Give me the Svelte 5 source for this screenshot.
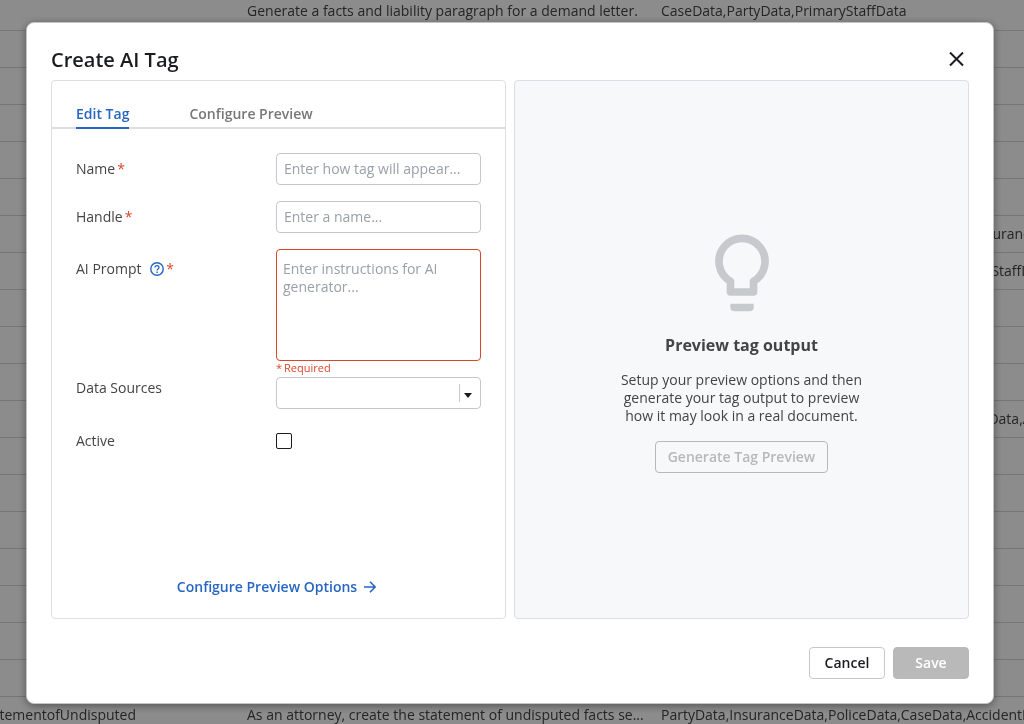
<script lang="ts">
  type Row = { name?: string; description?: string; sources?: string };

  const rows: Row[] = [
    {
      description: "Generate a facts and liability paragraph for a demand letter.",
      sources: "CaseData,PartyData,PrimaryStaffData",
    },
    {}, {}, {}, {}, {},
    { sources: "PartyData,CaseData,AccidentInfo,MedicaidData,InsuranceData" },
    { sources: "CaseData,PartyData,OfficeData,PoliceData,PrimaryStaffData" },
    {}, {}, {},
    { sources: "PartyData,InsuranceData,PoliceData,CaseData,FileData,AccidentInfo" },
    {}, {}, {}, {}, {}, {}, {},
    {
      name: "StatementofUndisputed",
      description: "As an attorney, create the statement of undisputed facts se...",
      sources: "PartyData,InsuranceData,PoliceData,CaseData,AccidentInfo",
    },
  ];

  const tabs = ["Edit Tag", "Configure Preview"];

  let open = $state(true);
  let activeTab = $state(0);
  let name = $state("");
  let handle = $state("");
  let prompt = $state("");
  let active = $state(false);
  let valid = $derived(name !== "" && handle !== "" && prompt !== "");
</script>

<div class="page">
  <table>
    <tbody>
      {#each rows as row}
        <tr>
          <td class="col-name"><span>{row.name ?? ""}</span></td>
          <td class="col-description">{row.description ?? ""}</td>
          <td>{row.sources ?? ""}</td>
        </tr>
      {/each}
    </tbody>
  </table>
</div>

{#if open}
  <div class="overlay">
    <div class="modal" role="dialog" aria-modal="true" aria-labelledby="modal-title">
      <header>
        <h1 id="modal-title">Create AI Tag</h1>
        <button class="close" aria-label="Close" onclick={() => (open = false)}>
          <svg width="16" height="16" viewBox="0 0 16 16">
            <path d="M1 .5l13 13M14 .5l-13 13" stroke="currentColor" stroke-width="2" />
          </svg>
        </button>
      </header>

      <div class="panels">
        <section class="panel">
          <div class="tabs" role="tablist">
            {#each tabs as tab, i}
              <button
                role="tab"
                class="tab"
                class:selected={activeTab === i}
                aria-selected={activeTab === i}
                onclick={() => (activeTab = i)}>{tab}</button
              >
            {/each}
          </div>

          <form>
            <div class="row">
              <label for="name">Name<span class="star">*</span></label>
              <input id="name" type="text" placeholder="Enter how tag will appear..." bind:value={name} />
            </div>
            <div class="row">
              <label for="handle">Handle<span class="star">*</span></label>
              <input id="handle" type="text" placeholder="Enter a name..." bind:value={handle} />
            </div>
            <div class="row top prompt">
              <label for="prompt">
                AI Prompt
                <svg class="help" width="14" height="14" viewBox="0 0 14 14" fill="none" stroke="currentColor">
                  <circle cx="7" cy="7" r="6.2" stroke-width="1.4" />
                  <path d="M5 5.6c0-1.2.9-1.9 2-1.9s2 .7 2 1.8c0 1.4-1.9 1.5-1.9 3" stroke-width="1.3" />
                  <path d="M7.1 9.5v1.4" stroke-width="1.4" />
                </svg><span class="star">*</span>
              </label>
              <div>
                <textarea id="prompt" placeholder="Enter instructions for AI generator..." bind:value={prompt}></textarea>
                <p class="error"><span>*</span>Required</p>
              </div>
            </div>
            <div class="row top sources">
              <label for="sources">Data Sources</label>
              <div class="select">
                <select id="sources"><option value=""></option></select>
                <svg width="14" height="18" viewBox="0 0 14 18">
                  <path d="M.5 0v18" stroke="#c4c8cc" />
                  <path d="M5 9h8l-4 5z" fill="#1b1c20" />
                </svg>
              </div>
            </div>
            <div class="row">
              <label for="active">Active</label>
              <input id="active" type="checkbox" bind:checked={active} />
            </div>
          </form>

          <button class="next" onclick={() => (activeTab = 1)}>
            Configure Preview Options
            <svg width="12" height="12" viewBox="0 0 12 12" fill="none" stroke="currentColor" stroke-width="1.6">
              <path d="M0 6h11M6 .8L11.2 6 6 11.2" />
            </svg>
          </button>
        </section>

        <section class="panel preview">
          <svg class="bulb" width="92" height="92" viewBox="15 21 276 276">
            <path
              d="M118.5 216V184A69 69 0 1 1 187.5 184V216Z"
              fill="none"
              stroke="currentColor"
              stroke-width="23"
              stroke-linejoin="round"
            />
            <path d="M118 251h70v11a12 12 0 0 1-12 12h-46a12 12 0 0 1-12-12z" fill="currentColor" />
          </svg>
          <h2>Preview tag output</h2>
          <p>
            Setup your preview options and then generate your tag output to preview how it may look in a
            real document.
          </p>
          <button class="btn generate" disabled>Generate Tag Preview</button>
        </section>
      </div>

      <footer>
        <button class="btn" onclick={() => (open = false)}>Cancel</button>
        <button class="btn save" disabled={!valid}>Save</button>
      </footer>
    </div>
  </div>
{/if}

<style>
  :global(body) {
    margin: 0;
    font-family: "Open Sans", "Noto Sans", sans-serif;
    font-size: 14px;
    line-height: 18px;
    color: #444;
  }

  * {
    box-sizing: border-box;
  }

  button,
  input,
  textarea,
  select {
    font: inherit;
    color: inherit;
  }

  h1,
  h2,
  p {
    margin: 0;
  }

  .page {
    position: fixed;
    inset: 0;
    overflow: hidden;
  }

  table {
    width: 100%;
    margin-top: -7px;
    table-layout: fixed;
    border-collapse: collapse;
  }

  td {
    height: 37px;
    padding: 0 0 0 12px;
    border-bottom: 1px solid #d8d8d8;
    white-space: nowrap;
  }

  .col-name {
    width: 235px;
    padding-right: 99px;
  }

  .col-name span {
    display: flex;
    justify-content: flex-end;
  }

  .col-description {
    width: 414px;
  }

  .overlay {
    position: fixed;
    inset: 0;
    display: flex;
    padding: 22px 30px 20px 26px;
    overflow: auto;
    background: rgba(0, 0, 0, 0.45);
  }

  .modal {
    flex: 1;
    display: flex;
    flex-direction: column;
    min-height: min-content;
    padding: 24px;
    border: 1px solid #c4c4c4;
    border-radius: 8px;
    background: #fff;
    box-shadow: 0 2px 8px rgba(0, 0, 0, 0.4);
  }

  header {
    display: flex;
    align-items: center;
    justify-content: space-between;
    margin-bottom: 7px;
  }

  h1 {
    font-size: 20px;
    line-height: 26px;
    font-weight: 600;
    color: #1b1c20;
  }

  .close {
    display: flex;
    padding: 4px;
    border: 0;
    background: none;
    color: #1b1c20;
    cursor: pointer;
  }

  .panels {
    flex: 1;
    display: grid;
    grid-template-columns: 1fr 1fr;
    gap: 8px;
  }

  .panel {
    display: flex;
    flex-direction: column;
    border: 1px solid #dcdee1;
    border-radius: 4px;
  }

  .tabs {
    display: flex;
    gap: 60px;
    padding: 22px 24px 0;
    border-bottom: 2px solid #dcdee0;
  }

  .tab {
    margin-bottom: -2px;
    padding: 2px 0 4px;
    border: 0;
    border-bottom: 2px solid transparent;
    background: none;
    font-weight: 600;
    color: #777;
    cursor: pointer;
  }

  .tab.selected {
    border-color: #2666c2;
    color: #2666c2;
  }

  form {
    flex: 1;
    display: flex;
    flex-direction: column;
    gap: 16px;
    padding: 24px;
  }

  .row {
    display: grid;
    grid-template-columns: 200px 1fr;
    align-items: center;
    min-height: 32px;
  }

  .row.top {
    align-items: start;
  }

  .prompt {
    margin-bottom: -16px;
  }

  .prompt label {
    padding-top: 11px;
  }

  .sources label {
    padding-top: 2px;
  }

  .star {
    margin-left: 2px;
    color: #d9472b;
  }

  .help {
    margin-left: 5px;
    vertical-align: -2px;
    color: #2666c2;
  }

  input[type="text"],
  textarea,
  select {
    display: block;
    width: 100%;
    min-width: 0;
    border: 1px solid #c4c8cc;
    border-radius: 4px;
    background: #fff;
  }

  input[type="text"],
  select {
    height: 32px;
    padding: 0 7px 2px;
  }

  textarea {
    height: 112px;
    padding: 10px 6px;
    border-color: #d9472b;
    resize: none;
  }

  input::placeholder,
  textarea::placeholder {
    color: #9aa0a8;
    opacity: 1;
  }

  .error {
    padding-bottom: 2px;
    font-size: 11px;
    line-height: 14px;
    color: #d9472b;
  }

  .error span {
    margin-right: 2px;
  }

  .select {
    position: relative;
  }

  select {
    appearance: none;
  }

  .select svg {
    position: absolute;
    top: 7px;
    right: 8px;
    pointer-events: none;
  }

  input[type="checkbox"] {
    appearance: none;
    width: 16px;
    height: 16px;
    margin: 0;
    border: 1px solid #1b1c20;
    border-radius: 2px;
  }

  input[type="checkbox"]:checked {
    background: #2666c2;
  }

  .next {
    display: flex;
    align-items: center;
    align-self: center;
    gap: 7px;
    margin-bottom: 20px;
    padding: 2px 4px 2px 0;
    border: 0;
    background: none;
    font-weight: 600;
    color: #2666c2;
    cursor: pointer;
  }

  .preview {
    align-items: center;
    justify-content: center;
    background: #f7f8f9;
    text-align: center;
  }

  .bulb {
    color: #c7cacc;
  }

  h2 {
    margin: 14px 0;
    font-size: 16px;
    line-height: 24px;
    font-weight: 700;
  }

  .preview p {
    max-width: 256px;
  }

  .btn {
    min-width: 76px;
    height: 32px;
    padding: 0 12px;
    border: 1px solid #c4c8cc;
    border-radius: 4px;
    background: #fff;
    font-weight: 600;
    color: #1b1c20;
  }

  .generate {
    margin-top: 16px;
    border-color: #b8b8b8;
    background: none;
    color: #b8b8b8;
  }

  footer {
    display: flex;
    justify-content: flex-end;
    gap: 8px;
    margin-top: 28px;
  }

  .save {
    border-color: #b9b9b9;
    background: #b9b9b9;
    color: #fff;
  }
</style>
